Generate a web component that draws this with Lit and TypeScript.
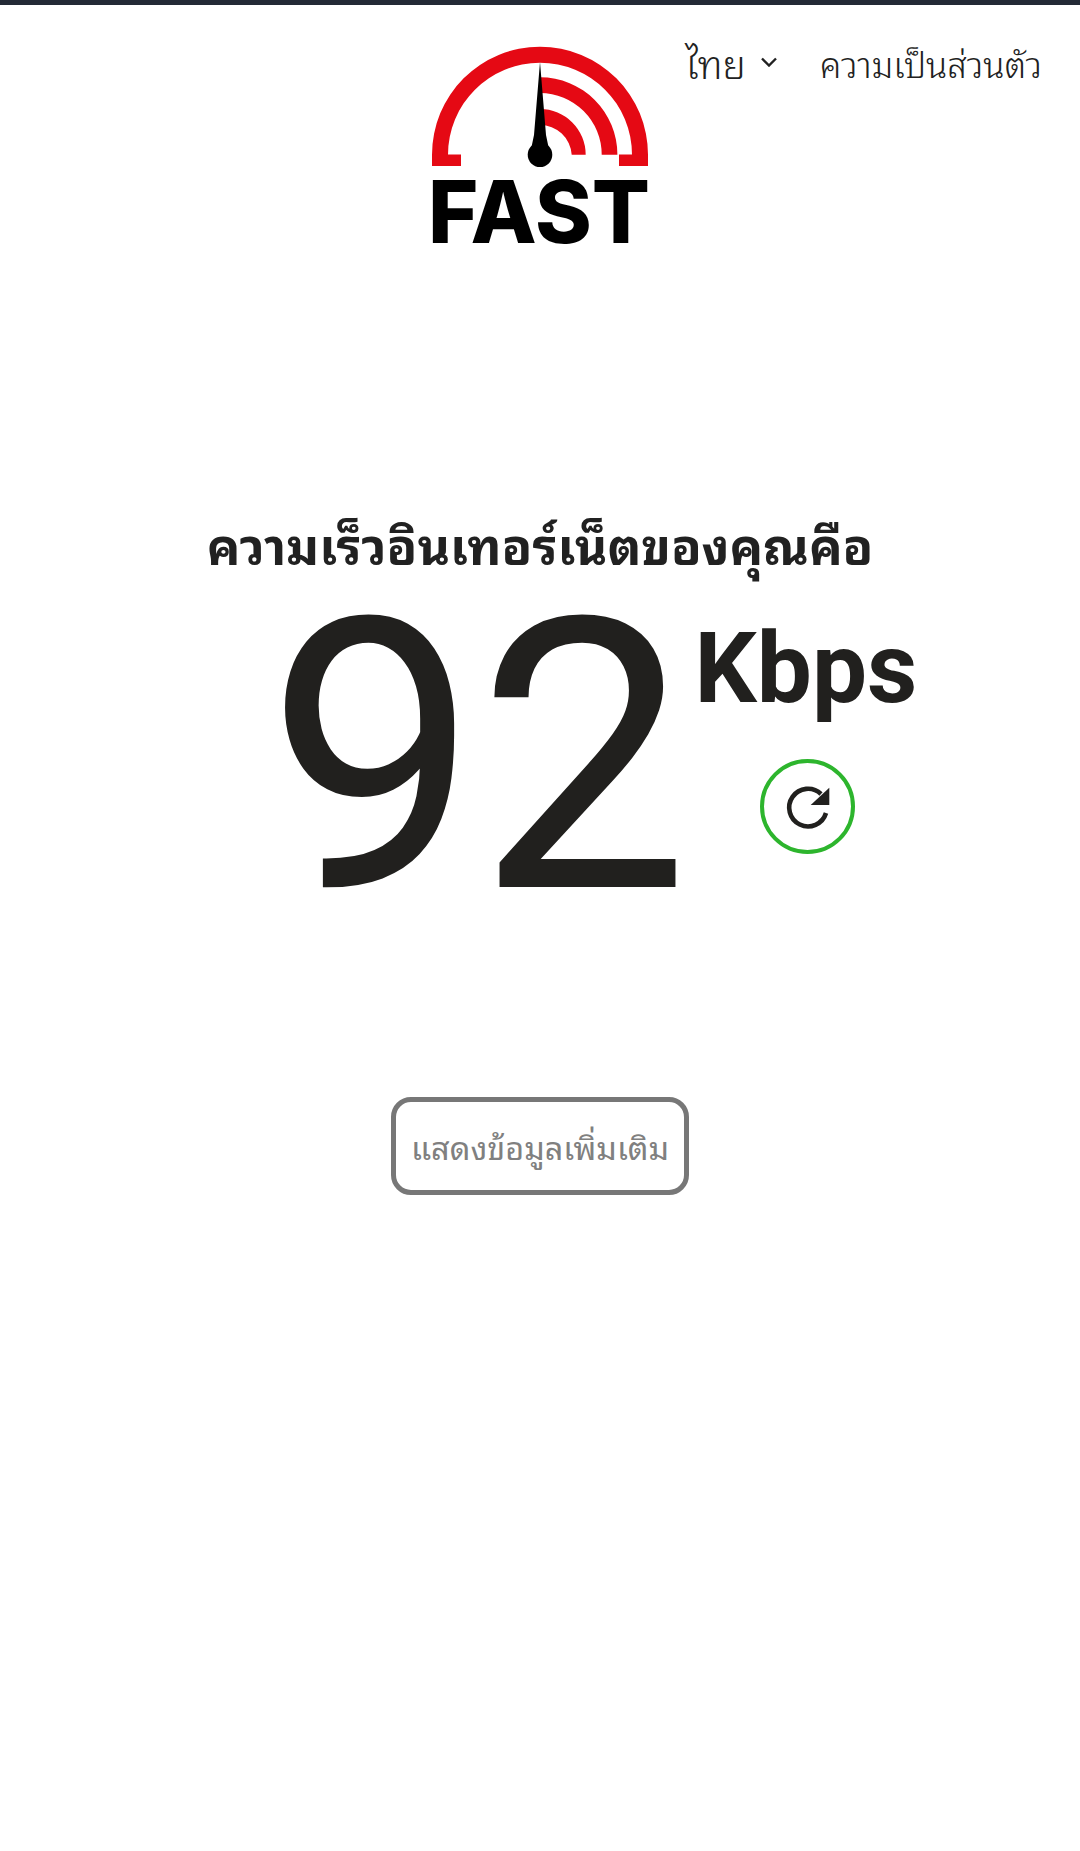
import { LitElement, html, css, svg } from "lit";
import { customElement } from "lit/decorators.js";

@customElement("app-root")
export class AppRoot extends LitElement {
  static styles = css`
    :host {
      display: block;
      min-height: 1851px;
      background: #fff;
      font-family: "Noto Sans Thai Looped", "Noto Sans", Roboto, sans-serif;
      color: #212121;
      overflow: hidden;
    }
    .topbar { height: 5px; background: #232a36; }
    .header {
      display: grid;
      grid-template-columns: 1fr 216px 1fr;
      padding-top: 41px;
      height: 241px;
    }
    .logo { grid-column: 2; display: block; width: 216px; height: 198px; overflow: visible; }
    .logo-text {
      font-family: Inter, "Liberation Sans", sans-serif;
      font-weight: 800;
      font-size: 86px;
    }
    .nav {
      grid-column: 3;
      display: flex;
      justify-content: flex-end;
      align-items: center;
      align-self: start;
      gap: 43px;
      padding: 0 38px 0 0;
      margin-top: -6px;
      font-size: 35px;
      font-weight: 300;
      line-height: 44px;
      white-space: nowrap;
    }
    .lang { display: flex; align-items: center; gap: 15px; }
    .lang-name { font-size: 39px; }
    .chev { display: block; width: 16px; height: 10px; }
    .headline {
      margin: 0;
      padding-top: 226px;
      text-align: center;
      font-size: 50px;
      line-height: 60px;
      font-weight: 700;
    }
    .speed {
      display: flex;
      justify-content: center;
      align-items: flex-start;
      gap: 7px;
      padding: 35px 0 0 104px;
      height: 314px;
      color: #21201e;
      font-family: Roboto, sans-serif;
    }
    .number {
      font-size: 378px;
      line-height: 300px;
      font-weight: 400;
      letter-spacing: -2px;
    }
    .side { display: flex; flex-direction: column; align-items: center; }
    .unit { font-size: 98px; line-height: 122px; font-weight: 700; }
    .refresh { display: block; width: 95px; height: 95px; margin: 29px 0 0 4px; }
    .more-wrap { display: flex; justify-content: center; padding-top: 175px; }
    .more {
      box-sizing: border-box;
      width: 298px;
      height: 98px;
      border: 5px solid #777;
      border-radius: 20px;
      background: #fff;
      color: #808080;
      font: inherit;
      font-size: 32.4px;
      font-weight: 400;
      padding: 0 0 3px;
    }
  `;

  render() {
    return html`
      <div class="topbar"></div>
      <header class="header">
        <svg class="logo" viewBox="432 46 216 198" role="img" aria-label="FAST">
          ${svg`
            <path fill="#e50914" d="M432 166V154.7a108 108 0 0 1 216 0V166H619V154.5H632V154.7a92 92 0 0 0-184 0V154.5H461V166Z"/>
            <path fill="#e50914" d="M540 77.3a77.4 77.4 0 0 1 77.4 77.4H601.7A61.7 61.7 0 0 0 540 93Z"/>
            <path fill="#e50914" d="M540 109a45.7 45.7 0 0 1 45.7 45.7H571.7A31.7 31.7 0 0 0 540 125Z"/>
            <path fill="#000" d="M540 62 546 135 548.5 147H531.5L534 135Z"/>
            <circle cx="540" cy="154.7" r="12.3" fill="#000"/>
            <text class="logo-text" x="428" y="243.3" textLength="222" lengthAdjust="spacingAndGlyphs">FAST</text>
          `}
        </svg>
        <nav class="nav">
          <div class="lang">
            <span class="lang-name">ไทย</span>
            <svg class="chev" viewBox="0 0 16 10">${svg`<path d="M1 1.5 8 8.5 15 1.5" fill="none" stroke="#212121" stroke-width="2.4"/>`}</svg>
          </div>
          <span>ความเป็นส่วนตัว</span>
        </nav>
      </header>
      <h1 class="headline">ความเร็วอินเทอร์เน็ตของคุณคือ</h1>
      <section class="speed">
        <div class="number">92</div>
        <div class="side">
          <div class="unit">Kbps</div>
          <svg class="refresh" viewBox="760 758 95 95">
            ${svg`
              <circle cx="807.5" cy="805.5" r="45.5" fill="none" stroke="#2db52d" stroke-width="4"/>
              <path d="M821 793A18.8 18.8 0 1 0 826 812" fill="none" stroke="#21201e" stroke-width="4.6"/>
              <path d="M829.3 786.7V804H810.7Z" fill="#21201e"/>
            `}
          </svg>
        </div>
      </section>
      <div class="more-wrap"><button class="more">แสดงข้อมูลเพิ่มเติม</button></div>
    `;
  }
}
